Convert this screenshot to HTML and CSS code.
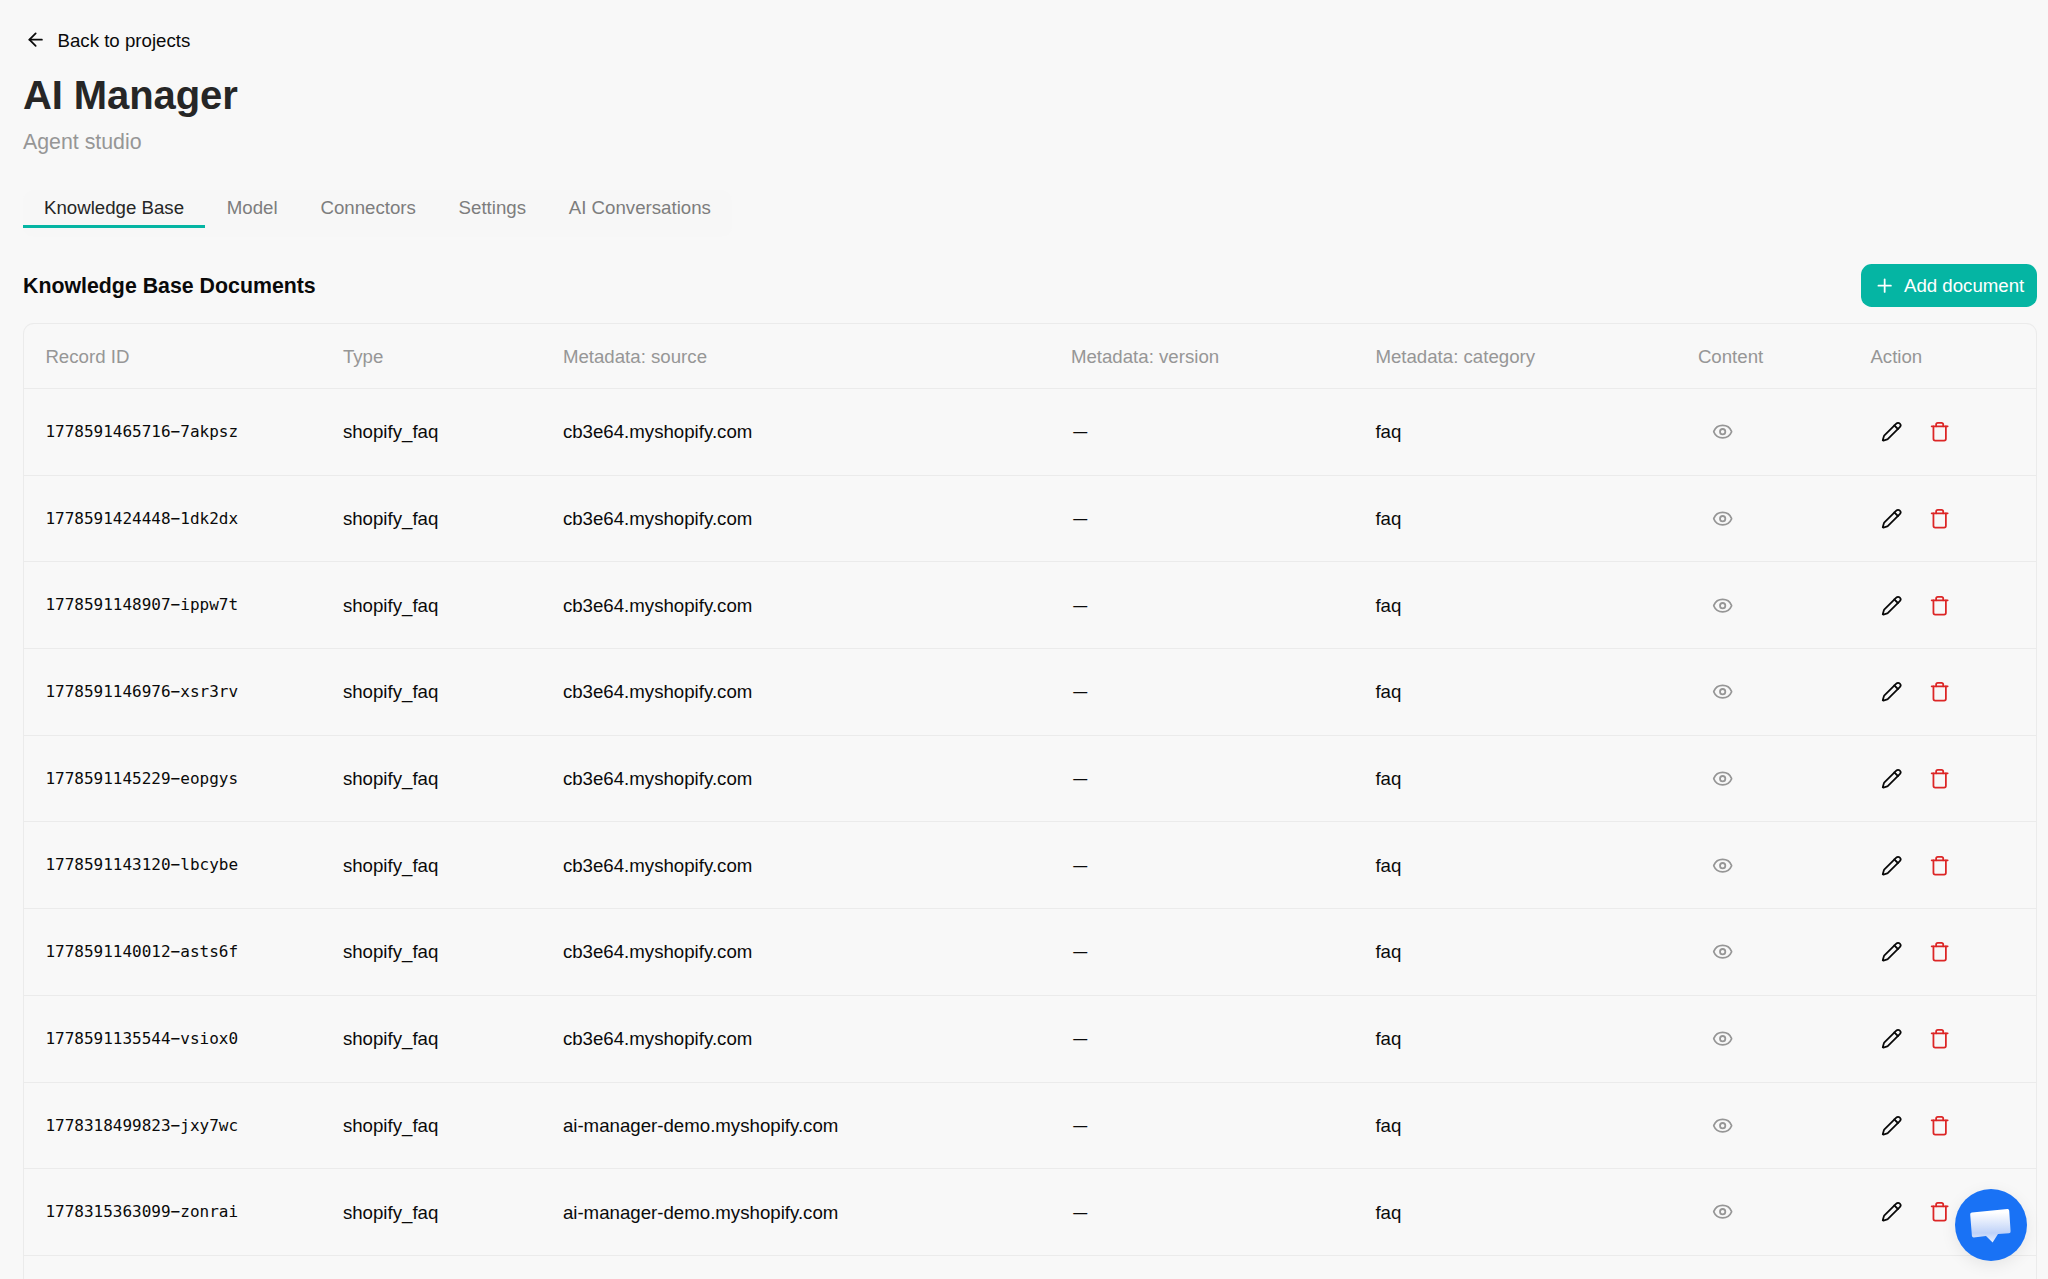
FILE: index.html
```html
<!DOCTYPE html>
<html lang="en">
<head>
<meta charset="utf-8">
<title>AI Manager</title>
<link rel="stylesheet" href="styles.css">
</head>
<body>
<svg class="sprite" aria-hidden="true">
  <symbol id="eye" viewBox="0 0 24 24"><path d="M2.062 12.348a1 1 0 0 1 0-.696 10.75 10.75 0 0 1 19.876 0 1 1 0 0 1 0 .696 10.75 10.75 0 0 1-19.876 0"/><circle cx="12" cy="12" r="3"/></symbol>
  <symbol id="pencil" viewBox="0 0 24 24"><path d="M21.174 6.812a1 1 0 0 0-3.986-3.987L3.842 16.174a2 2 0 0 0-.5.83l-1.321 4.352a.5.5 0 0 0 .623.622l4.353-1.32a2 2 0 0 0 .83-.497z"/><path d="m15 5 4 4"/></symbol>
  <symbol id="trash" viewBox="0 0 24 24"><path d="M3 6h18"/><path d="M19 6v14c0 1-1 2-2 2H7c-1 0-2-1-2-2V6"/><path d="M8 6V4c0-1 1-2 2-2h4c1 0 2 1 2 2v2"/></symbol>
</svg>
<main class="page">
  <a class="back"><svg class="icon" viewBox="0 0 24 24"><path d="m12 19-7-7 7-7"/><path d="M19 12H5"/></svg><span>Back to projects</span></a>
  <h1 class="title">AI Manager</h1>
  <p class="subtitle">Agent studio</p>
  <nav class="tabs">
    <a class="tab active">Knowledge Base</a>
    <a class="tab">Model</a>
    <a class="tab">Connectors</a>
    <a class="tab">Settings</a>
    <a class="tab">AI Conversations</a>
  </nav>
  <div class="section-head">
    <h2 class="section-title">Knowledge Base Documents</h2>
    <button class="add"><svg class="icon" viewBox="0 0 24 24"><path d="M5 12h14"/><path d="M12 5v14"/></svg><span>Add document</span></button>
  </div>
  <div class="table" id="table">
    <div class="row head"><span>Record ID</span><span>Type</span><span>Metadata: source</span><span>Metadata: version</span><span>Metadata: category</span><span>Content</span><span>Action</span></div>
  </div>
</main>
<button class="chat" aria-label="Open chat">
  <svg class="chat-icon" viewBox="0 0 72 72">
    <defs><linearGradient id="bubble" x1="0" y1="0" x2="0" y2="1"><stop offset=".1" stop-color="#fff"/><stop offset=".72" stop-color="#bfd2f8"/><stop offset="1" stop-color="#e8f0fe"/></linearGradient></defs>
    <path fill="url(#bubble)" d="M17 23.6 52.3 20Q54 19.8 54.2 21.5L55.6 42.2Q55.7 44 54 44.2L43 45.1 37.6 53.5 31 47 18.8 48.4Q17.1 48.5 16.9 46.8L15.2 25.5Q15.1 23.8 17 23.6Z"/>
  </svg>
</button>
<script src="rows.js"></script>
</body>
</html>
```
FILE: rows.js
```js
const shop = 'cb3e64.myshopify.com';
const demo = 'ai-manager-demo.myshopify.com';
const records = [
  ['1778591465716−7akpsz', shop],
  ['1778591424448−1dk2dx', shop],
  ['1778591148907−ippw7t', shop],
  ['1778591146976−xsr3rv', shop],
  ['1778591145229−eopgys', shop],
  ['1778591143120−lbcybe', shop],
  ['1778591140012−asts6f', shop],
  ['1778591135544−vsiox0', shop],
  ['1778318499823−jxy7wc', demo],
  ['1778315363099−zonrai', demo],
];
const icon = (name) => `<svg class="icon ${name}"><use href="#${name}"/></svg>`;
document.getElementById('table').insertAdjacentHTML('beforeend', records.map(([id, source]) => `
  <div class="row">
    <span class="mono">${id}</span><span>shopify_faq</span><span>${source}</span><span class="dash">—</span><span>faq</span>
    <div class="view">${icon('eye')}</div><div class="actions">${icon('pencil')}${icon('trash')}</div>
  </div>`).join(''));
```
FILE: styles.css
```css
* { box-sizing: border-box; }
html { overflow: hidden; }
body {
  margin: 0;
  height: 1279px;
  overflow: hidden;
  background: #f8f8f8;
  color: #0a0a0a;
  font: 18.67px/26.67px "Liberation Sans", Arial, sans-serif;
}
.sprite { display: none; }
.icon {
  width: 21.33px;
  height: 21.33px;
  flex: none;
  fill: none;
  stroke: currentColor;
  stroke-width: 2;
  stroke-linecap: round;
  stroke-linejoin: round;
}
.page { display: flex; flex-direction: column; height: 1279px; padding: 19px 11px 0 23px; }
.back { display: flex; align-items: center; gap: 11.2px; height: 42px; padding-left: 2px; }
.back span { padding-top: 2.4px; }
.title { margin: 8px 0 0; color: #262626; font-size: 40px; line-height: 53px; letter-spacing: -.1px; }
.subtitle { margin: 4px 0 0; color: #969696; font-size: 21.33px; line-height: 32px; }
.tabs { display: flex; align-self: flex-start; height: 47px; margin-top: 32px; background: #f7f7f7; border-radius: 10px; }
.tab { height: 38px; padding: 5px 21.4px 0; color: #7d7d7d; }
.tab.active { padding-left: 21px; color: #262626; border-bottom: 3px solid #05b5a3; }
.section-head { display: flex; align-items: center; justify-content: space-between; margin-top: 27px; }
.section-title { margin: 0; padding-top: 2px; font-size: 21.33px; }
.add {
  display: flex; align-items: center; gap: 8.67px;
  width: 176.5px; height: 43px; padding: 0 0 0 13.5px;
  border: 0; border-radius: 10.67px;
  background: #05b5a3; color: #fff; font: inherit;
}
.add span { padding-top: 1px; }
.table { flex: 1; margin-top: 16px; border: 1px solid #ebebeb; border-bottom: 0; border-radius: 10.67px 10.67px 0 0; }
.row {
  display: grid;
  grid-template-columns: 297.5px 220px 508px 304.5px 322.5px 172.5px 1fr;
  align-items: center;
  height: 86.7px;
  padding-left: 21.4px;
  border-bottom: 1px solid #ebebeb;
}
.row > span { padding-top: 1.7px; }
.row.head { height: 65px; color: #969696; }
.row.head > span { padding-top: 2.6px; }
.row > .mono { padding-top: .4px; font: 16px/22px "DejaVu Sans Mono", monospace; }
.row > .dash { justify-self: start; transform: translate(2.2px, -1px) scaleX(.75); transform-origin: left; }
.view { display: flex; padding-left: 14px; color: #969696; }
.actions { display: flex; gap: 27px; padding-left: 10.5px; }
.trash { color: #dc2626; }
.chat {
  position: fixed; right: 21px; bottom: 18px;
  width: 72px; height: 72px; padding: 0;
  border: 0; border-radius: 50%;
  background: #1972f5;
  box-shadow: 0 4px 16px rgba(0, 0, 0, .08);
}
.chat-icon { display: block; width: 72px; height: 72px; }
```
